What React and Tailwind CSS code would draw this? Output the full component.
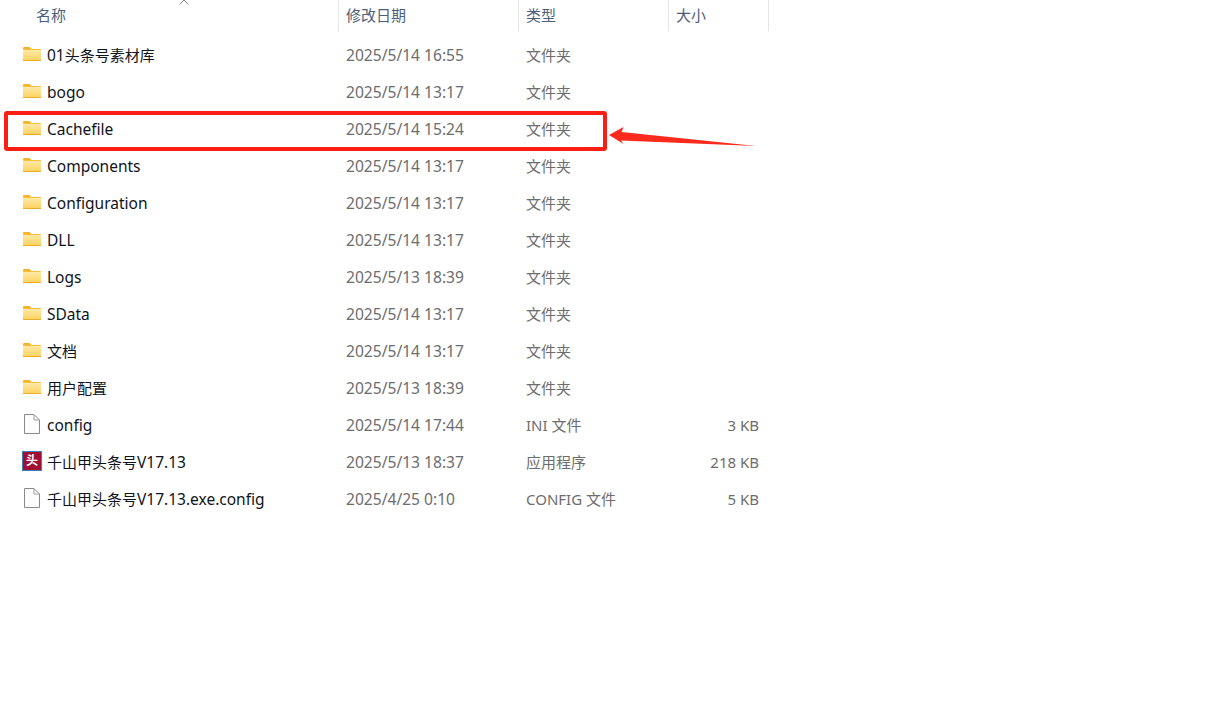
import React from "react";

const rows = [
  { name: "01头条号素材库", date: "2025/5/14 16:55", type: "文件夹", icon: "folder" },
  { name: "bogo", date: "2025/5/14 13:17", type: "文件夹", icon: "folder" },
  { name: "Cachefile", date: "2025/5/14 15:24", type: "文件夹", icon: "folder" },
  { name: "Components", date: "2025/5/14 13:17", type: "文件夹", icon: "folder" },
  { name: "Configuration", date: "2025/5/14 13:17", type: "文件夹", icon: "folder" },
  { name: "DLL", date: "2025/5/14 13:17", type: "文件夹", icon: "folder" },
  { name: "Logs", date: "2025/5/13 18:39", type: "文件夹", icon: "folder" },
  { name: "SData", date: "2025/5/14 13:17", type: "文件夹", icon: "folder" },
  { name: "文档", date: "2025/5/14 13:17", type: "文件夹", icon: "folder" },
  { name: "用户配置", date: "2025/5/13 18:39", type: "文件夹", icon: "folder" },
  { name: "config", date: "2025/5/14 17:44", type: "INI 文件", size: "3 KB", icon: "file" },
  { name: "千山甲头条号V17.13", date: "2025/5/13 18:37", type: "应用程序", size: "218 KB", icon: "app" },
  { name: "千山甲头条号V17.13.exe.config", date: "2025/4/25 0:10", type: "CONFIG 文件", size: "5 KB", icon: "file" },
];

function FolderIcon() {
  return (
    <svg width="20" height="18" viewBox="0 0 20 18" className="mb-[2px] shrink-0">
      <defs>
        <linearGradient id="folderBody" x1="0" y1="0" x2="0" y2="1">
          <stop offset="0" stopColor="#ffe9a6" />
          <stop offset="1" stopColor="#ffd364" />
        </linearGradient>
      </defs>
      <path d="M1 3.500C1 2.700 1.500 2 2.300 2H7.500L9.500 4H1Z" fill="#f5b325" />
      <rect x="1" y="4" width="18" height="12" rx="0.500" fill="#f9bf3c" />
      <rect x="1" y="5" width="18" height="10" fill="url(#folderBody)" />
      <rect x="1" y="15" width="18" height="1" fill="#ecac2c" />
    </svg>
  );
}

function FileIcon() {
  return (
    <svg width="20" height="20" viewBox="0 0 20 20" className="mb-[2px] shrink-0">
      <path d="M2.500 0.500H12L17.500 6V19.500H2.500Z" fill="#fcfcfc" stroke="#8a8a8a" />
      <path d="M12 0.500V6H17.500" fill="none" stroke="#a0a0a0" />
    </svg>
  );
}

function AppIcon() {
  return (
    <div className="mb-[2px] flex h-5 w-5 shrink-0 items-center justify-center border border-[#3b82b8] bg-[#a10f32] text-[12px] leading-none font-bold text-white">
      头
    </div>
  );
}

const icons = { folder: FolderIcon, file: FileIcon, app: AppIcon };

// latin runs read a little wider than the CJK ones in the reference
function FileName({ name }) {
  return name.split(/([\u4e00-\u9fff]+)/).map((part, i) =>
    /[\u4e00-\u9fff]/.test(part) ? (
      <span key={i}>{part}</span>
    ) : (
      <span key={i} className="text-[15.5px]">
        {part}
      </span>
    ),
  );
}

export default function App() {
  return (
    <div className="relative h-[712px] w-[1212px] overflow-hidden bg-white font-['Noto_Sans','Noto_Sans_CJK_SC',sans-serif] text-[15px]">
      {/* column headers */}
      <div className="relative flex h-[31px] text-[#4c607a]">
        <div className="w-[339px] border-r border-[#e5e5e5] pl-[36px] leading-[31px]">名称</div>
        <div className="w-[180px] border-r border-[#e5e5e5] pl-[7px] leading-[31px]">修改日期</div>
        <div className="w-[150px] border-r border-[#e5e5e5] pl-[7px] leading-[31px]">类型</div>
        <div className="w-[100px] border-r border-[#e5e5e5] pl-[7px] leading-[31px]">大小</div>
        <svg width="10" height="5" viewBox="0 0 10 5" className="absolute top-0 left-[179px]">
          <path d="M0.500 4.500L5 0L9.500 4.500" fill="none" stroke="#8a8a8a" />
        </svg>
      </div>

      {/* file rows */}
      <div className="pt-[6px]">
        {rows.map((row) => {
          const Icon = icons[row.icon];
          return (
            <div key={row.name} className="flex h-[37px] items-center pb-px">
              <div className="flex w-[339px] items-center gap-[5px] pl-[22px] text-[#10141c]">
                <Icon />
                <span className="whitespace-nowrap pt-[2px]">
                  <FileName name={row.name} />
                </span>
              </div>
              <div className="w-[180px] pt-[2px] pl-[7px] text-[15.6px] text-[#6d6d6d]">{row.date}</div>
              <div className="w-[150px] pl-[7px] text-[#6d6d6d]">{row.type}</div>
              <div className="w-[90px] text-right text-[#6d6d6d]">{row.size}</div>
            </div>
          );
        })}
      </div>

      {/* annotation */}
      <div className="absolute top-[111px] left-[4px] h-[40px] w-[603px] rounded-[3px] border-[4px] border-[#fb1e14]" />
      <svg width="150" height="34" viewBox="0 0 150 34" className="absolute top-[122px] left-[608px]">
        <path d="M1 13L15.500 5L13.500 10L148 24L13 18.500L15.500 22Z" fill="#fb2a1c" />
      </svg>
    </div>
  );
}
